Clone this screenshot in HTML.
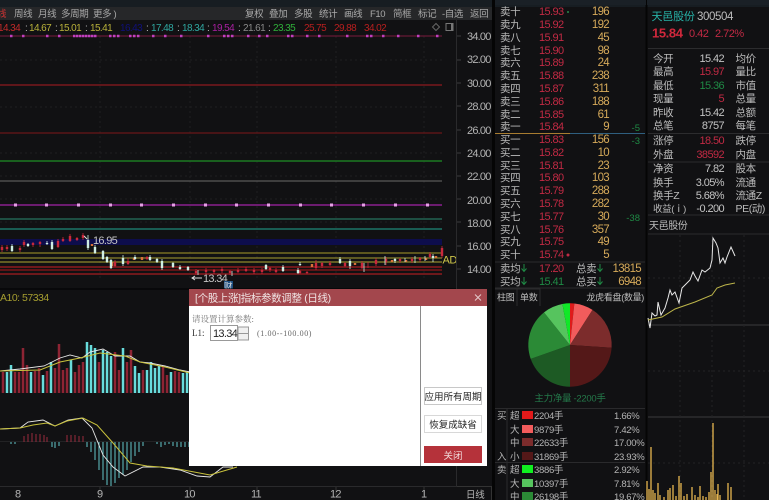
<!DOCTYPE html>
<html><head><meta charset="utf-8"><style>
html,body{margin:0;padding:0;background:#111113;width:769px;height:500px;overflow:hidden}
svg{display:block;filter:blur(.35px)}
text{font-family:"Liberation Sans","Noto Sans CJK SC",sans-serif;font-size:10px;fill:#bdbdbd}
.t text{font-size:9.500px;letter-spacing:-.4px;fill:#a9a9a9}
.v text{font-size:10px;letter-spacing:-.6px}
.ax text{font-size:11px;fill:#b4b4b4;letter-spacing:-.8px}
.lb text{font-size:10.500px;letter-spacing:-.4px;fill:#bcbcbc}
.pr text{font-size:11px;fill:#c22a44;letter-spacing:-.6px}
.qt text{font-size:11.500px;fill:#d6aa5a;text-anchor:end;letter-spacing:-.7px}
.sv text{font-size:11px;fill:#c4c4c4;text-anchor:end;letter-spacing:-.6px}
.tb text{font-size:9.500px;letter-spacing:-.3px;fill:#b4b4b4}
.gr{fill:#1f8a45!important}.rd{fill:#c22a44!important}
.end{text-anchor:end}
</style></head><body>
<svg width="769" height="500" viewBox="0 0 769 500" xmlns="http://www.w3.org/2000/svg">
<rect width="769" height="500" fill="#111113"/>
<rect width="769" height="7" fill="#171d22"/>
<rect y="7" width="492" height="13" fill="#262729"/>
<g class="t">
<text x="-3" y="17" style="fill:#c33">线</text><text x="14" y="17">周线</text><text x="38" y="17">月线</text><text x="61" y="17">多周期</text><text x="93" y="17">更多 )</text>
<text x="245" y="17">复权</text><text x="269" y="17">叠加</text><text x="294" y="17">多股</text><text x="319" y="17">统计</text><text x="344" y="17">画线</text><text x="370" y="17">F10</text><text x="393" y="17">简框</text><text x="418" y="17">标记</text><text x="442" y="17">-自选</text><text x="470" y="17">返回</text>
</g>
<g class="v">
<text x="-2" y="31" style="fill:#c22a2a">14.34</text><text x="25" y="31">:</text>
<text x="29" y="31" style="fill:#b9b23a">14.67</text><text x="55" y="31">:</text>
<text x="59" y="31" style="fill:#b9b23a">15.01</text><text x="85" y="31">:</text>
<text x="90" y="31" style="fill:#b9b23a">15.41</text>
<text x="120" y="31" style="fill:#10107a">16.43</text><text x="146" y="31">:</text>
<text x="151" y="31" style="fill:#2fa7a0">17.48</text><text x="177" y="31">:</text>
<text x="182" y="31" style="fill:#2fa7a0">18.34</text><text x="207" y="31">:</text>
<text x="212" y="31" style="fill:#a820a0">19.54</text><text x="238" y="31">:</text>
<text x="243" y="31" style="fill:#8a8a8a">21.61</text><text x="268" y="31">:</text>
<text x="273" y="31" style="fill:#2fb03a">23.35</text>
<text x="304" y="31" style="fill:#b81f1f">25.75</text>
<text x="334" y="31" style="fill:#b81f1f">29.88</text>
<text x="364" y="31" style="fill:#b81f1f">34.02</text>
</g>
<path d="M436 23.500l3.500 3.500-3.500 3.500-3.500-3.500z" fill="none" stroke="#666"/>
<rect x="446" y="23.500" width="7" height="7" fill="none" stroke="#777"/><rect x="451" y="24" width="2" height="6" fill="#777"/>
<!-- faint grid -->
<g stroke="#1e1e20" stroke-dasharray="2 3" fill="none">
<path d="M0 60H442M0 107H442M0 153H442M0 176H442M0 199H442M0 222H442"/>
<path d="M100 36V280M190 36V280M257 36V280M336 36V280M424 36V280"/>
</g>
<!-- price levels -->
<g fill="none">
<path d="M0 36H442" stroke="#7c1a3e" stroke-width="1"/>
<path d="M0 85H442" stroke="#8e1a1e" stroke-width="1.200"/>
<path d="M0 133H442" stroke="#7e1618" stroke-width="1"/>
<path d="M0 161H442" stroke="#1c7a22" stroke-width="1.400"/>
<path d="M0 181H442" stroke="#6a6a6a" stroke-width="1"/>
<path d="M0 205H442" stroke="#8a2090" stroke-width="1.400"/>
<path d="M0 219H442" stroke="#2a8a70" stroke-width="1"/>
<path d="M0 229H442" stroke="#1f8a78" stroke-width="1.200"/>
<rect x="0" y="239" width="442" height="6" fill="#0d0d4c"/>
<path d="M0 253H442" stroke="#a89a2a"/>
<path d="M0 258H442" stroke="#a8a030"/>
<path d="M0 262H442" stroke="#b0a830"/>
<path d="M0 267H442" stroke="#8e1a1e" stroke-width="1.400"/>
<path d="M0 270H442" stroke="#7a1518" stroke-width="1.400"/>
<path d="M0 274H442" stroke="#8e1a1e" stroke-width="1.400"/>
</g>
<path fill="none" stroke="#c040c0" stroke-width="2.500" d="M10 36h2.500M22 36h2.500M46 36h2.500M58 36h2.500M73 36h2.500M76 36h2.500M79 36h2.500M82 36h2.500M85 36h2.500M88 36h2.500M91 36h2.500M94 36h2.500M109 36h2.500M113 36h2.500M117 36h2.500M129 36h2.500M133 36h2.500M137 36h2.500M152 36h2.500M164 36h2.500M180 36h2.500M207 36h2.500M223 36h2.500M227 36h2.500M231 36h2.500M247 36h2.500M258 36h2.500M266 36h2.500M287 36h2.500M291 36h2.500M306 36h2.500M318 36h2.500M346 36h2.500M366 36h2.500M370 36h2.500M382 36h2.500M397 36h2.500M417 36h2.500M436 36h2.500"/>
<g fill="#e6a0e6">
<rect x="14" y="203.500" width="3" height="3"/><rect x="45" y="203.500" width="3" height="3"/><rect x="77" y="203.500" width="3" height="3"/><rect x="109" y="203.500" width="3" height="3"/><rect x="140" y="203.500" width="3" height="3"/><rect x="172" y="203.500" width="3" height="3"/><rect x="204" y="203.500" width="3" height="3"/><rect x="235" y="203.500" width="3" height="3"/>
<rect x="267" y="203.500" width="3" height="3"/><rect x="299" y="203.500" width="3" height="3"/><rect x="330" y="203.500" width="3" height="3"/><rect x="362" y="203.500" width="3" height="3"/><rect x="394" y="203.500" width="3" height="3"/><rect x="426" y="203.500" width="3" height="3"/>
</g>
<!-- candles -->
<path fill="none" stroke="#c8283c" stroke-width=".8" d="M2 245V252M7 245V251M20 246V252M24 240V247M33 242V247M40 241V247M58 239V248M63 237V242M70 234V242M77 237V241M83 233V240M115 260V267M128 258V265M147 256V260M196 269V275M206 268V274M214 269V274M222 267V273M230 270V275M238 268V273M246 267V272M254 268V274M262 268V274M270 267V272M276 268V273M300 270V274M307 271V274M316 260V270M322 262V268M330 261V266M345 262V267M362 261V269M368 262V268M376 258V266M386 257V265M400 258V263M412 257V263M420 257V262M430 252V258M442 246V258"/>
<path fill="none" stroke="#c8283c" stroke-width="2.400" d="M2 247V250M7 247V249M20 248V250M24 242V245M33 243V245M40 242V244M58 241V247M63 239V241M70 236V241M77 238V240M83 235V238M115 262V266M128 261V264M147 257V259M196 271V273M206 270V272M214 270V272M222 269V271M230 271V273M238 270V272M246 269V271M254 270V272M262 270V272M270 268V270M276 270V272M300 271V273M307 272V273M316 263V268M322 263V266M330 263V265M345 263V266M362 263V268M376 260V264M386 259V262M400 259V261M412 259V261M420 258V260M430 254V257M442 248V256"/>
<path fill="none" stroke="#d8703a" stroke-width="2.400" d="M112 262V266M142 257V260M134 258V260M92 244V246M312 264V267M355 263V265M392 260V262M406 260V262M426 258V260M436 256V258"/>
<path fill="none" stroke="#cfeee4" stroke-width=".8" d="M12 244V252M28 243V247M47 241V245M52 240V250M88 235V250M95 245V254M103 250V260M107 256V263M111 259V269M123 255V266M135 255V260M150 255V261M157 258V263M162 259V270M173 262V268M180 265V270M188 266V271M198 270V275M232 271V276M266 264V270M283 265V272M300 262V266M340 257V264M350 259V269M385 256V265M433 254V262M415 256V263M298 268V274M364 263V272M395 258V263M405 258V262M425 256V261"/>
<path fill="none" stroke="#cfeee4" stroke-width="2.400" d="M12 246V251M28 244V246M47 243V244M52 242V249M88 240V248M95 247V253M103 251V259M107 257V262M111 260V268M123 258V264M135 257V259M150 257V260M157 259V262M162 261V268M173 263V267M180 267V269M188 267V270M300 264V265M266 265V269M283 267V271M340 259V263M350 261V266M433 256V258M298 270V273M395 259V261"/>
<path d="M84 236l3 3M202 278h-10m3 -2l-3 2 3 2" stroke="#ddd" stroke-width="1" fill="none"/>
<text x="93" y="244" style="font-size:11px;letter-spacing:-.7px;fill:#c4c4c4">16.95</text>
<text x="203" y="282" style="font-size:11px;letter-spacing:-.7px;fill:#c4c4c4">13.34</text>
<rect x="224" y="281" width="9" height="9" fill="#1d4f80"/>
<text x="224" y="289" style="font-size:8.500px;fill:#ddd">财</text>
<text x="442.500" y="263.500" style="font-size:11px;letter-spacing:-.5px;fill:#cfc74a">AD</text>
<!-- right axis -->
<path d="M456.500 20V487" stroke="#2a2a2c"/>
<path d="M457 36h4M457 60h4M457 83h4M457 106h4M457 130h4M457 153h4M457 176h4M457 199h4M457 222h4M457 246h4M457 269h4" stroke="#3c3c3e"/>
<g class="ax">
<text x="467" y="40">34.00</text><text x="467" y="63">32.00</text><text x="467" y="87">30.00</text><text x="467" y="110">28.00</text><text x="467" y="134">26.00</text><text x="467" y="157">24.00</text><text x="467" y="180">22.00</text><text x="467" y="204">20.00</text><text x="467" y="227">18.00</text><text x="467" y="250">16.00</text><text x="467" y="273">14.00</text>
</g>
<path d="M0 289H456" stroke="#000"/>
<text x="0" y="301" style="font-size:10.500px;letter-spacing:-.5px;fill:#a69e30">A10: 57334</text>
<!-- volume -->
<path fill="none" stroke="#8e2434" stroke-width="2.500" d="M3 393V372M15 393V372M19 393V372M23 393V348M27 393V365M35 393V371M39 393V368M47 393V371M55 393V368M59 393V344M63 393V370M67 393V368M75 393V372M79 393V365M83 393V362M99 393V362M115 393V352M119 393V370M127 393V362M131 393V350M143 393V370M163 393V366M167 393V375M175 393V371M179 393V372"/>
<path fill="none" stroke="#68dcdc" stroke-width="2.500" d="M7 393V372M11 393V365M31 393V372M43 393V375M51 393V362M71 393V360M87 393V342M91 393V345M95 393V348M103 393V350M107 393V352M111 393V356M123 393V348M135 393V366M139 393V373M147 393V370M151 393V362M155 393V368M159 393V366M171 393V372M183 393V373M187 393V372"/>
<polyline fill="none" stroke="#e8e8e8" stroke-width=".9" points="0,371 20,369 44,366 60,358 70,355 82,358 90,352 103,349 115,356 130,356 140,362 150,363 165,366 180,370 190,372"/>
<polyline fill="none" stroke="#c9c23c" stroke-width="1" points="0,371 40,370 60,362 80,358 100,353 125,356 140,362 165,367 190,373"/>
<!-- MACD -->
<path d="M0 441.500H456" stroke="#222224"/>
<path fill="none" stroke="#8e2a3a" stroke-width="1.100" d="M24 442V436M28 442V434M32 442V433M36 442V434M40 442V434M44 442V435M47 442V437M67 442V435M71 442V435M75 442V435M79 442V436M83 442V436"/>
<path fill="none" stroke="#5bb5b8" stroke-width="1.100" d="M11 442V444M15 442V444M52 442V447M55 442V448M59 442V446M87 442V447M91 442V452M95 442V460M99 442V470M103 442V480M107 442V485M111 442V487M115 442V483M119 442V478M123 442V475M127 442V470M131 442V462M135 442V456M139 442V452M143 442V446M157 442V444M161 442V447M165 442V445M169 442V444M173 442V446M177 442V447M181 442V447M185 442V447M189 442V447"/>
<polyline fill="none" stroke="#e6e6e6" stroke-width=".9" points="0,429 20,428 28,422 43,420 55,426 68,420 82,418 92,428 103,455 113,467 125,476 143,467 160,467 180,470 197,476 210,477 223,467 233,467"/>
<polyline fill="none" stroke="#c9c23c" stroke-width="1" points="0,429 20,428 33,425 47,423 55,426 67,421 83,418 97,425 113,443 130,463 147,466 173,468 210,475 237,467"/>
<path d="M0 486.500H456" stroke="#2a2a2c"/>
<path d="M100 487V495M190 487V495M257 487V495M336 487V495M424 487V495" stroke="#333"/>
<g class="ax">
<text x="15" y="497.500">8</text><text x="97" y="497.500">9</text><text x="184" y="497.500">10</text><text x="251" y="497.500">11</text><text x="330" y="497.500">12</text><text x="421" y="497.500">1</text><text x="466" y="498" style="font-size:9.500px;letter-spacing:-.3px">日线</text>
</g>
<path d="M457 486.500H491.500V500" stroke="#333" fill="none"/>
<!-- dividers -->
<rect x="492" y="0" width="3" height="500" fill="#050505"/>
<rect x="645.500" y="0" width="2" height="500" fill="#050505"/>
<rect x="495" y="0" width="151" height="5" fill="#1a2026"/>
<rect x="647" y="0" width="122" height="5" fill="#1a2026"/>
<!-- order book -->
<g class="lb">
<text x="500" y="15">卖十</text><text x="500" y="28">卖九</text><text x="500" y="41">卖八</text><text x="500" y="54">卖七</text><text x="500" y="66">卖六</text><text x="500" y="79">卖五</text><text x="500" y="92">卖四</text><text x="500" y="105">卖三</text><text x="500" y="118">卖二</text><text x="500" y="130">卖一</text>
<text x="500" y="143">买一</text><text x="500" y="156">买二</text><text x="500" y="169">买三</text><text x="500" y="181">买四</text><text x="500" y="194">买五</text><text x="500" y="207">买六</text><text x="500" y="220">买七</text><text x="500" y="233">买八</text><text x="500" y="245">买九</text><text x="500" y="258">买十</text>
</g>
<g class="pr">
<text x="539" y="15">15.93</text><text x="539" y="28">15.92</text><text x="539" y="41">15.91</text><text x="539" y="54">15.90</text><text x="539" y="66">15.89</text><text x="539" y="79">15.88</text><text x="539" y="92">15.87</text><text x="539" y="105">15.86</text><text x="539" y="118">15.85</text><text x="539" y="130">15.84</text>
<text x="539" y="143">15.83</text><text x="539" y="156">15.82</text><text x="539" y="169">15.81</text><text x="539" y="181">15.80</text><text x="539" y="194">15.79</text><text x="539" y="207">15.78</text><text x="539" y="220">15.77</text><text x="539" y="233">15.76</text><text x="539" y="245">15.75</text><text x="539" y="258">15.74</text>
</g>
<g class="qt">
<text x="609" y="15">196</text><text x="609" y="28">192</text><text x="609" y="41">45</text><text x="609" y="54">98</text><text x="609" y="66">24</text><text x="609" y="79">238</text><text x="609" y="92">311</text><text x="609" y="105">188</text><text x="609" y="118">61</text><text x="609" y="130">9</text>
<text x="609" y="143">156</text><text x="609" y="156">10</text><text x="609" y="169">23</text><text x="609" y="181">103</text><text x="609" y="194">288</text><text x="609" y="207">282</text><text x="609" y="220">30</text><text x="609" y="233">357</text><text x="609" y="245">49</text><text x="609" y="258">5</text>
</g>
<circle cx="568" cy="12" r="1" fill="#2a8a4a"/><circle cx="568" cy="255" r="1.500" fill="#c22a44"/>
<text x="640" y="131" class="end gr" style="font-size:9.500px">-5</text><text x="640" y="144" class="end gr" style="font-size:9.500px">-3</text><text x="640" y="221" class="end gr" style="font-size:9.500px">-38</text>
<path d="M495 133.500H570" stroke="#a87c30"/><path d="M570 133.500H645" stroke="#2f5f7f"/>
<path d="M495 262H645M495 288H645" stroke="#2a2a2c"/>
<g class="lb">
<text x="500" y="272">卖均</text><text x="500" y="285">买均</text><text x="576" y="272">总卖</text><text x="576" y="285">总买</text>
</g>
<path d="M524 264v7m-2.500-2.500l2.500 3 2.500-3M524 277v7m-2.500-2.500l2.500 3 2.500-3M600 264v7m-2.500-2.500l2.500 3 2.500-3M600 277v7m-2.500-2.500l2.500 3 2.500-3" stroke="#1f8a45" fill="none"/>
<text x="539" y="272" style="font-size:11px;fill:#c22a44;letter-spacing:-.6px">17.20</text><text x="539" y="285" style="font-size:11px;fill:#1f8a45;letter-spacing:-.6px">15.41</text>
<g class="qt"><text x="641" y="272">13815</text><text x="641" y="285">6948</text></g>
<!-- tabs -->
<path d="M495 289H540V306M517 289V306" stroke="#2a2a2c" fill="none"/>
<text x="497" y="300.500" style="font-size:9px;letter-spacing:-.3px">柱图</text><text x="520" y="300.500" style="font-size:9px;letter-spacing:-.3px">单数</text>
<text x="644" y="300.500" class="end" style="font-size:9px;letter-spacing:-.3px">龙虎看盘(数量)</text>
<!-- pie -->
<path d="M570 345V303.300L574.360 303.500Z" fill="#e01a1a"/>
<path d="M570 345L574.360 303.500A41.700 41.700 0 0 1 592.500 309.900Z" fill="#f25c5c"/>
<path d="M570 345L592.500 309.900A41.700 41.700 0 0 1 611.600 347.800Z" fill="#7c2c2c"/>
<path d="M570 345L611.600 347.800A41.700 41.700 0 0 1 570 386.700Z" fill="#541818"/>
<path d="M570 345V386.700A41.700 41.700 0 0 1 530.700 358.900Z" fill="#1d5a24"/>
<path d="M570 345L530.700 358.900A41.700 41.700 0 0 1 544 312.400Z" fill="#2b8a36"/>
<path d="M570 345L544 312.400A41.700 41.700 0 0 1 562.400 304Z" fill="#56c45e"/>
<path d="M570 345L562.400 304A41.700 41.700 0 0 1 570 303.300Z" fill="#10e828"/>
<text x="570" y="401.500" text-anchor="middle" style="font-size:9.500px;letter-spacing:-.3px;fill:#24794a">主力净量 -2200手</text>
<!-- table -->
<path d="M495 408.500H645M495 462.500H645" stroke="#2a2a2c"/><path d="M507 408V500" stroke="#2a2a2c"/>
<g class="tb">
<text x="497" y="419">买</text><text x="497" y="460">入</text><text x="497" y="473">卖</text>
<text x="510" y="419">超</text><text x="510" y="433">大</text><text x="510" y="446">中</text><text x="510" y="460">小</text><text x="510" y="473">超</text><text x="510" y="487">大</text><text x="510" y="500">中</text>
<text x="534" y="419">2204手</text><text x="534" y="433">9879手</text><text x="534" y="446">22633手</text><text x="534" y="460">31869手</text><text x="534" y="473">3886手</text><text x="534" y="487">10397手</text><text x="534" y="500">26198手</text>
<text x="614" y="419">1.66%</text><text x="614" y="433">7.42%</text><text x="614" y="446">17.00%</text><text x="614" y="460">23.93%</text><text x="614" y="473">2.92%</text><text x="614" y="487">7.81%</text><text x="614" y="500">19.67%</text>
</g>
<rect x="522" y="411" width="11" height="8" fill="#e01a1a"/><rect x="522" y="425" width="11" height="8" fill="#f25c5c"/><rect x="522" y="438" width="11" height="8" fill="#7c2c2c"/><rect x="522" y="452" width="11" height="8" fill="#541818"/><rect x="522" y="465" width="11" height="8" fill="#10f020"/><rect x="522" y="479" width="11" height="8" fill="#56c45e"/><rect x="522" y="492" width="11" height="8" fill="#2b8a36"/>
<!-- quote panel -->
<text x="651.500" y="20" style="font-size:11px;letter-spacing:-.2px;fill:#27b3a8">天邑股份</text><text x="697" y="20" style="font-size:11.500px;letter-spacing:-.4px;fill:#bdbdbd">300504</text>
<text x="652" y="37.500" style="font-size:13px;letter-spacing:-.4px;fill:#d0283c;font-weight:bold">15.84</text>
<text x="689" y="37" style="font-size:11px;letter-spacing:-.5px;fill:#c22a44">0.42</text><text x="715" y="37" style="font-size:11px;letter-spacing:-.5px;fill:#c22a44">2.72%</text>
<path d="M648 48.500H769M648 133.500H769M648 162H769M648 215H769M648 234H769" stroke="#2c2c2e"/>
<g class="lb">
<text x="653" y="62">今开</text><text x="653" y="75">最高</text><text x="653" y="89">最低</text><text x="653" y="102">现量</text><text x="653" y="116">昨收</text><text x="653" y="129">总笔</text><text x="653" y="144">涨停</text><text x="653" y="158">外盘</text><text x="653" y="172">净资</text><text x="653" y="186">换手</text><text x="653" y="199">换手Z</text><text x="653" y="212" style="font-size:9.500px">收益(ⅰ)</text>
<text x="735.500" y="62">均价</text><text x="735.500" y="75">量比</text><text x="735.500" y="89">市值</text><text x="735.500" y="102">总量</text><text x="735.500" y="116">总额</text><text x="735.500" y="129">每笔</text><text x="735.500" y="144">跌停</text><text x="735.500" y="158">内盘</text><text x="735.500" y="172">股本</text><text x="735.500" y="186">流通</text><text x="735.500" y="199">流通Z</text><text x="735.500" y="212">PE(动)</text>
<text x="649" y="229" style="font-size:10px">天邑股份</text>
</g>
<g class="sv">
<text x="724" y="62">15.42</text><text x="724" y="75" class="rd">15.97</text><text x="724" y="89" class="gr">15.36</text><text x="724" y="102" class="rd">5</text><text x="724" y="116">15.42</text><text x="724" y="129">8757</text><text x="724" y="144" class="rd">18.50</text><text x="724" y="158" class="rd">38592</text><text x="724" y="172">7.82</text><text x="724" y="186">3.05%</text><text x="724" y="199">5.68%</text><text x="724" y="212">-0.200</text>
</g>
<!-- mini chart -->
<g stroke="#222224" fill="none">
<path d="M648 325H769M648 417H769" stroke="#3a3a3c"/>
<path d="M648 278H769M648 371H769M648 463H769" stroke-dasharray="2 3"/>
<path d="M680 235V500M712 235V500M744 235V500" stroke-dasharray="2 3"/>
</g>
<polyline fill="none" stroke="#e8e8e8" stroke-width="1" points="648,318 650,328 652,313 655,316 657,315 658,302 661,315 665,308 668,298 670,290 672,295 675,292 679,303 682,288 685,285 690,280 693,272 695,276 698,281 702,270 705,272 710,268 712,260 713,238 716,243 718,248 720,263 723,258 725,263 727,257 731,247 735,256"/>
<polyline fill="none" stroke="#bdb54a" stroke-width="1" points="648,320 662,317 675,309 695,302 712,295 717,288 725,285 735,283"/>
<path fill="none" stroke="#e6b650" stroke-width="1.300" d="M647 500V481M649 500V489M651 500V447M653 500V490M655 500V493M658 500V483M660 500V495M664 500V497M668 500V490M670 500V488M673 500V485M676 500V496M679 500V476M681 500V483M684 500V496M687 500V494M692 500V487M695 500V495M698 500V497M700 500V486M703 500V496M706 500V497M709 500V492M711 500V472M713 500V423M715 500V490M717 500V494M718 500V484M720 500V495M728 500V483M731 500V487"/>
<!-- dialog -->
<rect x="189" y="289" width="298" height="177" fill="#ffffff"/>
<rect x="189" y="289" width="298" height="17" fill="#a3474d"/>
<text x="195" y="301.500" style="font-size:10.500px;letter-spacing:-.35px;fill:#f0e4e4">[个股上涨]指标参数调整 (日线)</text>
<path d="M475 294.500l6 6m0-6l-6 6" stroke="#e4caca" stroke-width="1" fill="none"/>
<path d="M420.500 306V466" stroke="#8a8a8a"/>
<text x="192" y="322" style='font-family:"Liberation Serif","Noto Serif CJK SC",serif;font-size:8.500px;fill:#777'>请设置计算参数:</text>
<text x="192" y="336" style='font-family:"Liberation Serif",serif;font-size:9px;fill:#333'>L1:</text>
<rect x="210.500" y="325.500" width="27" height="15" fill="#fff" stroke="#999"/>
<text x="213" y="337" style="font-size:11px;letter-spacing:-.7px;fill:#222">13.34</text>
<rect x="238" y="327" width="10.500" height="13" fill="#f0f0f0" stroke="#999"/><path d="M238 333.500h10.500" stroke="#999"/>
<text x="257" y="336" style='font-family:"Liberation Serif",serif;font-size:8px;fill:#666;letter-spacing:.6px'>(1.00--100.00)</text>
<rect x="424.500" y="387.500" width="57" height="17" fill="#fff" stroke="#c8c8c8"/>
<text x="453" y="400" text-anchor="middle" style="font-size:9.500px;fill:#222">应用所有周期</text>
<rect x="424.500" y="415.500" width="57" height="17" fill="#fff" stroke="#d8d8d8"/>
<text x="453" y="428" text-anchor="middle" style="font-size:9.500px;fill:#222">恢复成缺省</text>
<rect x="424" y="446" width="58" height="17" fill="#b5323a"/>
<text x="453" y="459" text-anchor="middle" style="font-size:9.500px;fill:#f0d8d8">关闭</text>
</svg>
</body></html>
